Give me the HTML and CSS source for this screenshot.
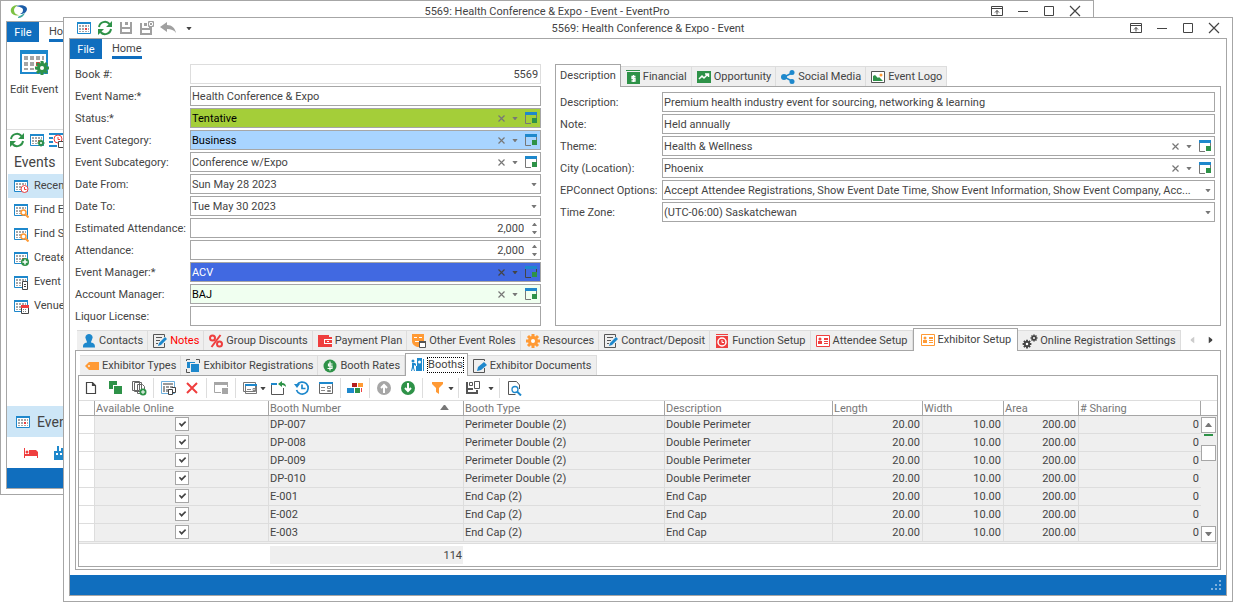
FILE: index.html
```html
<!DOCTYPE html>
<html lang="en">
<head>
  <meta charset="UTF-8">
  <meta name="viewport" content="width=device-width, initial-scale=1">
  <title>5569: Health Conference &amp; Expo - Event</title>
  <link rel="stylesheet" href="styles.css">
</head>
<body>
  <!-- icon sprite -->
  <svg class="sprite" aria-hidden="true">
    <symbol id="cal" viewBox="0 0 16 16">
      <path fill="#fff" stroke="#1e88cc" d="M1.5 2.5h13v11h-13z"/>
      <path fill="#1e88cc" d="M1 2h14v2H1z"/>
      <path fill="#a6a6a6" d="M3 5h2v2H3zM6 5h2v2H6zM9 5h2v2H9zM12 5h1v2h-1zM3 8h2v2H3zM6 8h2v2H6zM12 8h1v2h-1zM3 11h2v1H3zM6 11h2v1H6zM9 11h2v1H9zM12 11h1v1h-1z"/>
      <path fill="#ef3e3e" d="M9 8h2v2H9z"/>
    </symbol>
    <symbol id="refresh" viewBox="0 0 16 16">
      <path fill="none" stroke="#2e9248" stroke-width="2" d="M2 7a6 6 0 0 1 10.500-3M14 9a6 6 0 0 1-10.500 3"/>
      <path fill="#2e9248" d="M15 1v6H9zM1 15V9h6z"/>
    </symbol>
    <symbol id="save" viewBox="0 0 16 16">
      <path fill="#a0a0a0" d="M2 2h2v5h8V2h2v12H2zM4 9v3h8V9zM7 2h3v3H7z" fill-rule="evenodd"/>
    </symbol>
    <symbol id="savex" viewBox="0 0 16 16">
      <path fill="#a0a0a0" fill-rule="evenodd" d="M1 3h2v5h7V7h3v8H1zM3 10v3h8v-3zM5 3h3v3H5z"/>
      <path fill="#fff" stroke="#a0a0a0" d="M9.500 1.500h5v5h-5zM10.500 2.500l3 3M13.500 2.500l-3 3"/>
    </symbol>
    <symbol id="undo" viewBox="0 0 16 16">
      <path fill="#a0a0a0" d="M0 7l7-5v3c5 0 8 3 9 8-2-3-5-4-9-4v3z"/>
    </symbol>
    <symbol id="caret" viewBox="0 0 7 4"><path fill="currentColor" d="M0 0h7L4 4H3z"/></symbol>
    <symbol id="cross" viewBox="0 0 7 7"><path fill="none" stroke="currentColor" stroke-width="1.200" d="M.5.5l6 6M6.500.5l-6 6"/></symbol>
    <symbol id="lookup" viewBox="0 0 14 14">
      <path fill="none" stroke="currentColor" d="M1.500 3v9.500H7M12.500 3v4"/>
      <path fill="#1e88cc" d="M1 1h12v3H1z"/><path fill="#2e9248" d="M8 7h5v5H8z"/>
    </symbol>
    <symbol id="pin" viewBox="0 0 12 12"><path fill="none" stroke="#444" d="M.5 1.500h11v9H.5zM.5 3.500h11M6 9.500V5.500M4 7.500l2-2 2 2"/></symbol>
    <symbol id="min" viewBox="0 0 12 12"><path stroke="#444" d="M1 6.500h10"/></symbol>
    <symbol id="max" viewBox="0 0 12 12"><path fill="none" stroke="#444" d="M1.500 1.500h9v9h-9z"/></symbol>
    <symbol id="close" viewBox="0 0 12 12"><path stroke="#444" stroke-width="1.200" d="M1 1l10 10M11 1L1 11"/></symbol>
    <symbol id="gear" viewBox="0 0 16 16">
      <path fill="none" stroke="currentColor" stroke-width="3" d="M8 1v14M1 8h14M3 3l10 10M13 3L3 13"/>
      <circle cx="8" cy="8" r="5" fill="currentColor"/><circle cx="8" cy="8" r="2" fill="#fff"/>
    </symbol>
    <symbol id="cal-gear" viewBox="0 0 16 16"><use href="#cal"/><use href="#gear" x="8" y="7" width="8" height="8" color="#2e9248"/></symbol>
    <symbol id="cal-clock" viewBox="0 0 16 16"><use href="#cal"/><circle cx="11.500" cy="11" r="3.500" fill="#fff" stroke="#ef3e3e"/><path fill="none" stroke="#ef3e3e" d="M11.500 9v2.500h2"/></symbol>
    <symbol id="cal-search" viewBox="0 0 16 16"><use href="#cal"/><circle cx="10.500" cy="10.500" r="2.500" fill="#fff" stroke="#ff9a35" stroke-width="1.500"/><path stroke="#ff9a35" stroke-width="2" d="M12.500 12.500l3 3"/></symbol>
    <symbol id="cal-plus" viewBox="0 0 16 16"><use href="#cal"/><circle cx="12" cy="12" r="4" fill="#2e9248"/><path stroke="#fff" stroke-width="1.500" d="M9.500 12h5M12 9.500v5"/></symbol>
    <symbol id="cal-doc" viewBox="0 0 16 16"><use href="#cal"/><path fill="#fff" stroke="#444" d="M9.500 7.500h5v8h-5z"/><path stroke="#444" d="M11 10.500h2M11 12.500h2"/></symbol>
    <symbol id="cal-cal" viewBox="0 0 16 16"><use href="#cal"/><path fill="#fff" stroke="#444" d="M8.500 8.500h7v7h-7z"/><path fill="#ef3e3e" d="M8 7h8v3H8z"/><path fill="#888" d="M10 11h1v1h-1zM12 11h1v1h-1zM10 13h1v1h-1zM12 13h1v1h-1z"/></symbol>
    <symbol id="list-clock" viewBox="0 0 16 16"><path fill="#1e88cc" d="M0 1h16v2H0zM0 5h4v2H0zM0 9h4v2H0zM0 13h8v2H0z"/><circle cx="9" cy="7" r="4" fill="#fff" stroke="#ef3e3e"/><path fill="none" stroke="#ef3e3e" d="M9 5v2.500h2"/><path fill="#fff" stroke="#444" d="M9.500 9.500h6v6h-6z"/></symbol>
    <symbol id="bed" viewBox="0 0 16 16"><path fill="#ef3e3e" d="M1 3h1v6h4V5h7l2 2v6h-1v-2H2v2H1z"/><circle cx="4" cy="7" r="1.500" fill="#ef3e3e"/></symbol>
    <symbol id="building" viewBox="0 0 16 16"><path fill="#1e88cc" fill-rule="evenodd" d="M1 6h3V1h2v5h2V3h2v3h5v9H1zM3 8v2h2V8zM7 8v2h2V8zM11 8v2h2V8z"/></symbol>
    <symbol id="logo" viewBox="0 0 18 16"><path fill="#7cc142" d="M8 2C3 2 0 5 1 9c1 3 5 4 9 3-4 0-6-2-6-5 0-2 2-4 4-5z"/><path fill="#1c5da8" d="M6 3c6-2 11 0 11 3s-3 5-7 5c2-1 3-2 3-4S11 4 6 3z"/><path fill="#3fa9a0" d="M8 14c1-1 4-2 7-4-1 3-4 5-7 5z"/></symbol>
    <symbol id="money" viewBox="0 0 16 16"><path fill="#2e9248" d="M1 1h14v1H1zM2 3h13v12H2z"/><path fill="none" stroke="#fff" stroke-width="1.300" d="M10.500 7.500H7v2h3v2.500H6.500M8.500 6v7"/></symbol>
    <symbol id="trend" viewBox="0 0 16 16"><path fill="#2e9248" d="M1 2h14v12H1z"/><path fill="none" stroke="#fff" stroke-width="1.500" d="M3 10l3-3 2 2 4-4M9 5h3.500v3"/></symbol>
    <symbol id="share" viewBox="0 0 16 16"><path fill="none" stroke="#1e88cc" stroke-width="1.500" d="M12 4L4 8l8 4"/><g fill="#1e88cc"><circle cx="4" cy="8" r="3"/><circle cx="12" cy="3.500" r="2.500"/><circle cx="12" cy="12.500" r="2.500"/></g></symbol>
    <symbol id="photo" viewBox="0 0 16 16"><path fill="#fff" stroke="#555" d="M1.500 2.500h13v11h-13z"/><path fill="#2e9248" d="M3 12V7l2-1 3 3 1-1 4 4z"/><circle cx="11" cy="6" r="1.500" fill="#ff9a35"/></symbol>
    <symbol id="person" viewBox="0 0 16 16"><path fill="#1e88cc" d="M8 1a3.500 3.500 0 0 1 3 5.500C10.500 8 10 8.500 10 9.500c3 .5 4 1.500 4 5H2c0-3.500 1-4.500 4-5 0-1-.5-1.500-1-3A3.500 3.500 0 0 1 8 1z"/></symbol>
    <symbol id="note" viewBox="0 0 16 16"><path fill="none" stroke="#555" d="M12.500 10v4.500h-11v-13h11V4M4 4.500h6M4 7.500h4M4 10.500h2"/><path fill="#1e88cc" d="M6 13l1-3 6-6 2 2-6 6z"/></symbol>
    <symbol id="pen" viewBox="0 0 16 16"><path fill="none" stroke="#555" d="M12.500 10v4.500h-11v-13h11V3"/><path fill="#1e88cc" d="M5 13l1-4 6-5 3 3-6 5z"/></symbol>
    <symbol id="percent" viewBox="0 0 16 16"><g fill="none" stroke="#ef3e3e" stroke-width="2"><circle cx="4.500" cy="5" r="2.500"/><circle cx="11.500" cy="11" r="2.500"/><path d="M12.500 2L3.500 14"/></g></symbol>
    <symbol id="wallet" viewBox="0 0 16 16"><path fill="#ef3e3e" d="M1 2h11v2h3v10H1z"/><path fill="#fff" d="M7 6h8v5H7z"/><path fill="#ef3e3e" d="M8 7h7v3H8z"/><path fill="#fff" d="M10 8h2v1h-2z"/></symbol>
    <symbol id="mask" viewBox="0 0 16 16"><path fill="#ff9a35" d="M1 1h12v7c0 4-2 6-5 6S1 12 1 8z"/><path fill="#fff" d="M3 4h3v1H3zM8 4h3v1H8zM4 8h5v1H4z"/><path fill="#fff" stroke="#555" d="M8.500 8.500h6v6h-6z"/><path fill="#555" d="M8 8h7v2H8z"/></symbol>
    <symbol id="clock" viewBox="0 0 16 16"><path fill="#ef3e3e" d="M2 1h12v1H2zM2 3h12v12H2z"/><circle cx="8" cy="9" r="4" fill="#ef3e3e" stroke="#fff" stroke-width="1.500"/><path fill="none" stroke="#fff" d="M8 7v2.500h2"/></symbol>
    <symbol id="card" viewBox="0 0 16 16"><path fill="#fff" stroke="currentColor" d="M1.500 2.500h13v11h-13z"/><circle cx="5" cy="6" r="1.500" fill="currentColor"/><path fill="currentColor" d="M3 8h4v3H3zM9 5h4v2H9zM9 8h4v1H9zM9 10h4v1H9z"/></symbol>
    <symbol id="gears" viewBox="0 0 16 16"><use href="#gear" x="0" y="6" width="10" height="10"/><use href="#gear" x="8" y="1" width="8" height="8"/></symbol>
    <symbol id="tag" viewBox="0 0 16 16"><path fill="#ff9a35" fill-rule="evenodd" d="M1 8l4-4h10v8H5zM4 8a1 1 0 1 0 2 0 1 1 0 0 0-2 0z"/></symbol>
    <symbol id="regs" viewBox="0 0 16 16"><path fill="#1e88cc" d="M2 4h8v1H5v5H2zM6 6h8v8H6z"/><path fill="none" stroke="#555" d="M1.500 3V1.500H5M11 1.500h3.500V5M1.500 11v3.500H5"/></symbol>
    <symbol id="coin" viewBox="0 0 16 16"><circle cx="8" cy="8" r="6.500" fill="#2e9248"/><path fill="none" stroke="#fff" stroke-width="1.200" d="M10.500 6H6.500v2h3.500v2.500H5.500M8 3.500v9"/></symbol>
    <symbol id="booth" viewBox="0 0 16 16"><path fill="#1e88cc" d="M7 1h5v13H6V9h1zM13 2h1v12h-1zM2 6h3l1 1v2L4 8v3l1 3H4l-1-3-1 3H1l1-4z"/><circle cx="3" cy="4" r="1.500" fill="#1e88cc"/><circle cx="9.500" cy="5" r="1.500" fill="#fff"/></symbol>
    <symbol id="new" viewBox="0 0 16 16"><path fill="#fff" stroke="#444" stroke-width="1.200" d="M3.500 2.500h6l3 3v8h-9zM9.500 2.500v3h3"/></symbol>
    <symbol id="copy" viewBox="0 0 16 16"><path fill="#2e9248" d="M2 1h8v4H6v4H2zM7 6h8v8H7z"/></symbol>
    <symbol id="copies" viewBox="0 0 16 16"><path fill="#fff" stroke="#666" d="M1.500 1.500h7v9h-7zM3.500 2.500h7v9h-7zM6.500 4.500h5l2 2v7h-7z"/><circle cx="12" cy="12" r="3.500" fill="#2e9248"/><path stroke="#fff" d="M10 12h4M12 10v4"/></symbol>
    <symbol id="layout" viewBox="0 0 16 16"><path fill="#fff" stroke="#6fb1de" d="M1.500 1.500h13v12h-13z"/><path fill="#999" d="M3 3h10v2H3zM3 6h2v6H3zM6 6h3v2H6zM6 9h3v3H6zM10 6h3v2h-3z"/><path fill="#fff" stroke="#444" d="M8.500 9.500h4v5h-4zM11.500 7.500h4v5h-3"/></symbol>
    <symbol id="delete" viewBox="0 0 16 16"><path stroke="#ef3e3e" stroke-width="2" d="M3 3l10 10M13 3L3 13"/></symbol>
    <symbol id="winoff" viewBox="0 0 16 16"><path fill="none" stroke="#a6a6a6" d="M1.500 3v9.500H8M14.500 3v4"/><path fill="#a6a6a6" d="M1 2h14v3H1zM9 8h6v6H9z"/></symbol>
    <symbol id="form" viewBox="0 0 16 16"><path fill="#fff" stroke="#777" d="M1.500 2.500h12v9h-12zM3.500 4.500h11v9h-11z"/><path fill="#1e88cc" d="M3 4h12v2H3z"/><path stroke="#888" d="M5 9.500h4M11 8.500h2v2h-2z" fill="none"/></symbol>
    <symbol id="open" viewBox="0 0 16 16"><path fill="none" stroke="#555" d="M1.500 3v11.500h12V8"/><path fill="#1e88cc" d="M1 3h6v2H1z"/><path fill="#2e9248" d="M8 4l4-3v2c3 0 4 2 4 4-1-1-2-2-4-2v2z"/></symbol>
    <symbol id="history" viewBox="0 0 16 16"><path fill="none" stroke="#1e88cc" stroke-width="1.700" d="M2.500 10A6 6 0 1 0 3 5M8 4.500v4h3.500"/><path fill="#1e88cc" d="M0 4h6L3 8z"/></symbol>
    <symbol id="fields" viewBox="0 0 16 16"><path fill="#fff" stroke="#666" d="M1.500 2.500h13v11h-13z"/><path fill="#1e88cc" d="M1 2h14v2H1z"/><path fill="none" stroke="#888" d="M3 7.500h4M3 10.500h4M9.500 6.500h3v2h-3zM9.500 10.500h3v1h-3z"/></symbol>
    <symbol id="boxes" viewBox="0 0 16 16"><path fill="#b51e1e" d="M5 3h5v4H5z"/><path fill="#ff9a35" d="M11 3h5v4h-5z"/><path fill="#1e88cc" d="M0 8h7v5H0z"/><path fill="#2e9248" d="M8 8h5v5H8z"/><path fill="#ef3e3e" d="M14 8h1v4h-1z"/></symbol>
    <symbol id="up" viewBox="0 0 16 16"><circle cx="8" cy="8" r="7" fill="#a6a6a6"/><path fill="none" stroke="#fff" stroke-width="2" d="M8 13V5M5 8l3-3 3 3"/></symbol>
    <symbol id="down" viewBox="0 0 16 16"><circle cx="8" cy="8" r="7" fill="#2e9248"/><path fill="none" stroke="#fff" stroke-width="2" d="M8 3v8M5 8l3 3 3-3"/></symbol>
    <symbol id="filter" viewBox="0 0 16 16"><path fill="#ff9a35" d="M3 2h11v2l-4 4v6l-3-2V8L3 4z"/></symbol>
    <symbol id="savelay" viewBox="0 0 16 16"><path fill="none" stroke="#555" stroke-width="2" d="M2 2v11h10v-3M2 9h6"/><path fill="none" stroke="#555" d="M4.500 2.500h3v3h-3zM9.500 1.500h5v7h-5z"/></symbol>
    <symbol id="preview" viewBox="0 0 16 16"><path fill="none" stroke="#555" d="M13.500 9V5l-3-3.500h-8v13h7"/><circle cx="9" cy="9.500" r="3" fill="#fff" stroke="#1e88cc" stroke-width="1.300"/><path stroke="#1e88cc" stroke-width="2" d="M11 11.500l4 4"/></symbol>
  </svg>

  <div class="desktop">
    <!-- main application window -->
    <section class="window window-back">
      <header class="titlebar">
        <div class="quick"><svg class="logo"><use href="#logo"/></svg></div>
        <div class="title">5569: Health Conference &amp; Expo - Event - EventPro</div>
        <div class="sys">
          <button aria-label="Pin"><svg><use href="#pin"/></svg></button>
          <button aria-label="Minimize"><svg><use href="#min"/></svg></button>
          <button aria-label="Maximize"><svg><use href="#max"/></svg></button>
          <button aria-label="Close"><svg><use href="#close"/></svg></button>
        </div>
      </header>
      <div class="frame">
        <nav class="ribbon-tabs">
          <button class="file">File</button>
          <button class="home">Home</button>
        </nav>
        <div class="ribbon">
          <button class="big-button">
            <svg><use href="#cal-gear"/></svg>
            <span>Edit Event</span>
          </button>
        </div>
        <div class="side">
          <div class="side-tools">
            <button aria-label="Refresh"><svg class="icon"><use href="#refresh"/></svg></button>
            <button aria-label="Edit event"><svg class="icon"><use href="#cal-gear"/></svg></button>
            <button aria-label="Schedule"><svg class="icon"><use href="#list-clock"/></svg></button>
          </div>
          <h2>Events</h2>
          <a class="side-item active" href="#"><svg class="icon"><use href="#cal-clock"/></svg>Recent</a>
          <a class="side-item" href="#"><svg class="icon"><use href="#cal-search"/></svg>Find E</a>
          <a class="side-item" href="#"><svg class="icon"><use href="#cal-search"/></svg>Find S</a>
          <a class="side-item" href="#"><svg class="icon"><use href="#cal-plus"/></svg>Create</a>
          <a class="side-item" href="#"><svg class="icon"><use href="#cal-doc"/></svg>Event</a>
          <a class="side-item" href="#"><svg class="icon"><use href="#cal-cal"/></svg>Venue</a>
          <a class="side-group" href="#"><svg class="icon"><use href="#cal"/></svg>Events</a>
          <div class="side-icons">
            <button aria-label="Hotels"><svg class="icon"><use href="#bed"/></svg></button>
            <button aria-label="Venues"><svg class="icon"><use href="#building"/></svg></button>
          </div>
        </div>
        <footer class="status"></footer>
      </div>
    </section>

    <!-- event window -->
    <section class="window window-front">
      <header class="titlebar">
        <div class="quick">
          <button aria-label="Event"><svg class="icon"><use href="#cal"/></svg></button>
          <button aria-label="Refresh"><svg class="icon"><use href="#refresh"/></svg></button>
          <button aria-label="Save"><svg class="icon"><use href="#save"/></svg></button>
          <button aria-label="Save and close"><svg class="icon"><use href="#savex"/></svg></button>
          <button aria-label="Undo"><svg class="icon"><use href="#undo"/></svg></button>
          <button aria-label="Customize"><svg class="caret"><use href="#caret"/></svg></button>
        </div>
        <div class="title">5569: Health Conference &amp; Expo - Event</div>
        <div class="sys">
          <button aria-label="Pin"><svg><use href="#pin"/></svg></button>
          <button aria-label="Minimize"><svg><use href="#min"/></svg></button>
          <button aria-label="Maximize"><svg><use href="#max"/></svg></button>
          <button aria-label="Close"><svg><use href="#close"/></svg></button>
        </div>
      </header>
      <div class="frame">
        <nav class="ribbon-tabs">
          <button class="file">File</button>
          <button class="home">Home</button>
        </nav>
        <main class="content">
          <div class="form">
            <div class="fields">
              <div class="row"><label for="book">Book #:</label>
                <div class="field readonly"><input class="num" id="book" value="5569" readonly></div></div>
              <div class="row"><label for="name">Event Name:*</label>
                <div class="field"><input id="name" value="Health Conference &amp; Expo"></div></div>
              <div class="row"><label for="status">Status:*</label>
                <div class="field green"><select id="status"><option>Tentative</option></select>
                  <button class="clear" aria-label="Clear"><svg><use href="#cross"/></svg></button><svg class="arrow"><use href="#caret"/></svg><button class="look" aria-label="Look up"><svg><use href="#lookup"/></svg></button></div></div>
              <div class="row"><label for="category">Event Category:</label>
                <div class="field sky"><select id="category"><option>Business</option></select>
                  <button class="clear" aria-label="Clear"><svg><use href="#cross"/></svg></button><svg class="arrow"><use href="#caret"/></svg><button class="look" aria-label="Look up"><svg><use href="#lookup"/></svg></button></div></div>
              <div class="row"><label for="subcategory">Event Subcategory:</label>
                <div class="field"><select id="subcategory"><option>Conference w/Expo</option></select>
                  <button class="clear" aria-label="Clear"><svg><use href="#cross"/></svg></button><svg class="arrow"><use href="#caret"/></svg><button class="look" aria-label="Look up"><svg><use href="#lookup"/></svg></button></div></div>
              <div class="row"><label for="from">Date From:</label>
                <div class="field"><select id="from"><option>Sun May 28 2023</option></select><svg class="arrow last"><use href="#caret"/></svg></div></div>
              <div class="row"><label for="to">Date To:</label>
                <div class="field"><select id="to"><option>Tue May 30 2023</option></select><svg class="arrow last"><use href="#caret"/></svg></div></div>
              <div class="row"><label for="estimated">Estimated Attendance:</label>
                <div class="field"><input class="num" id="estimated" value="2,000">
                  <div class="spin"><button class="spin-up" aria-label="Increase"><svg><use href="#caret"/></svg></button><button aria-label="Decrease"><svg><use href="#caret"/></svg></button></div></div></div>
              <div class="row"><label for="attendance">Attendance:</label>
                <div class="field"><input class="num" id="attendance" value="2,000">
                  <div class="spin"><button class="spin-up" aria-label="Increase"><svg><use href="#caret"/></svg></button><button aria-label="Decrease"><svg><use href="#caret"/></svg></button></div></div></div>
              <div class="row"><label for="manager">Event Manager:*</label>
                <div class="field royal"><select id="manager"><option>ACV</option></select>
                  <button class="clear" aria-label="Clear"><svg><use href="#cross"/></svg></button><svg class="arrow"><use href="#caret"/></svg><button class="look" aria-label="Look up"><svg><use href="#lookup"/></svg></button></div></div>
              <div class="row"><label for="account">Account Manager:</label>
                <div class="field honeydew"><select id="account"><option>BAJ</option></select>
                  <button class="clear" aria-label="Clear"><svg><use href="#cross"/></svg></button><svg class="arrow"><use href="#caret"/></svg><button class="look" aria-label="Look up"><svg><use href="#lookup"/></svg></button></div></div>
              <div class="row"><label for="liquor">Liquor License:</label>
                <div class="field"><input id="liquor"></div></div>
            </div>

            <div class="details">
              <div class="tabs" role="tablist">
                <button class="tab active" role="tab">Description</button>
                <button class="tab" role="tab"><svg class="icon"><use href="#money"/></svg>Financial</button>
                <button class="tab" role="tab"><svg class="icon"><use href="#trend"/></svg>Opportunity</button>
                <button class="tab" role="tab"><svg class="icon"><use href="#share"/></svg>Social Media</button>
                <button class="tab" role="tab"><svg class="icon"><use href="#photo"/></svg>Event Logo</button>
              </div>
              <div class="panel fields">
                <div class="row"><label for="description">Description:</label>
                  <div class="field"><input id="description" value="Premium health industry event for sourcing, networking &amp; learning"></div></div>
                <div class="row"><label for="note-text">Note:</label>
                  <div class="field"><input id="note-text" value="Held annually"></div></div>
                <div class="row"><label for="theme">Theme:</label>
                  <div class="field"><select id="theme"><option>Health &amp; Wellness</option></select>
                    <button class="clear" aria-label="Clear"><svg><use href="#cross"/></svg></button><svg class="arrow"><use href="#caret"/></svg><button class="look" aria-label="Look up"><svg><use href="#lookup"/></svg></button></div></div>
                <div class="row"><label for="city">City (Location):</label>
                  <div class="field"><select id="city"><option>Phoenix</option></select>
                    <button class="clear" aria-label="Clear"><svg><use href="#cross"/></svg></button><svg class="arrow"><use href="#caret"/></svg><button class="look" aria-label="Look up"><svg><use href="#lookup"/></svg></button></div></div>
                <div class="row"><label for="epconnect">EPConnect Options:</label>
                  <div class="field"><select id="epconnect"><option>Accept Attendee Registrations, Show Event Date Time, Show Event Information, Show Event Company, Acc...</option></select><svg class="arrow last"><use href="#caret"/></svg></div></div>
                <div class="row"><label for="zone">Time Zone:</label>
                  <div class="field"><select id="zone"><option>(UTC-06:00) Saskatchewan</option></select><svg class="arrow last"><use href="#caret"/></svg></div></div>
              </div>
            </div>
          </div>

          <div class="section">
            <div class="tabs indent" role="tablist">
              <button class="tab" role="tab"><svg class="icon"><use href="#person"/></svg>Contacts</button>
              <button class="tab alert" role="tab"><svg class="icon"><use href="#note"/></svg>Notes</button>
              <button class="tab" role="tab"><svg class="icon"><use href="#percent"/></svg>Group Discounts</button>
              <button class="tab" role="tab"><svg class="icon"><use href="#wallet"/></svg>Payment Plan</button>
              <button class="tab" role="tab"><svg class="icon"><use href="#mask"/></svg>Other Event Roles</button>
              <button class="tab" role="tab"><svg class="icon orange"><use href="#gear"/></svg>Resources</button>
              <button class="tab" role="tab"><svg class="icon"><use href="#note"/></svg>Contract/Deposit</button>
              <button class="tab" role="tab"><svg class="icon"><use href="#clock"/></svg>Function Setup</button>
              <button class="tab" role="tab"><svg class="icon red"><use href="#card"/></svg>Attendee Setup</button>
              <button class="tab active" role="tab"><svg class="icon orange"><use href="#card"/></svg>Exhibitor Setup</button>
              <button class="tab" role="tab"><svg class="icon"><use href="#gears"/></svg>Online Registration Settings</button>
              <button class="tab-scroll prev" aria-label="Previous tabs"><svg><use href="#caret"/></svg></button>
              <button class="tab-scroll next" aria-label="Next tabs"><svg><use href="#caret"/></svg></button>
            </div>
            <div class="panel outer">
              <div class="tabs indent" role="tablist">
                <button class="tab" role="tab"><svg class="icon"><use href="#tag"/></svg>Exhibitor Types</button>
                <button class="tab" role="tab"><svg class="icon"><use href="#regs"/></svg>Exhibitor Registrations</button>
                <button class="tab" role="tab"><svg class="icon"><use href="#coin"/></svg>Booth Rates</button>
                <button class="tab active focused" role="tab"><svg class="icon"><use href="#booth"/></svg><span>Booths</span></button>
                <button class="tab" role="tab"><svg class="icon"><use href="#pen"/></svg>Exhibitor Documents</button>
              </div>
              <div class="panel inner">
                <div class="toolbar">
                  <button aria-label="New"><svg class="icon"><use href="#new"/></svg></button>
                  <button aria-label="Copy"><svg class="icon"><use href="#copy"/></svg></button>
                  <button aria-label="Add multiple"><svg class="icon"><use href="#copies"/></svg></button>
                  <i class="sep"></i>
                  <button aria-label="Edit"><svg class="icon"><use href="#layout"/></svg></button>
                  <button aria-label="Delete"><svg class="icon"><use href="#delete"/></svg></button>
                  <i class="sep"></i>
                  <button aria-label="Lookup"><svg class="icon"><use href="#winoff"/></svg></button>
                  <i class="sep"></i>
                  <button class="drop" aria-label="Views"><svg class="icon"><use href="#form"/></svg><svg class="caret"><use href="#caret"/></svg></button>
                  <button aria-label="Open"><svg class="icon"><use href="#open"/></svg></button>
                  <button aria-label="History"><svg class="icon"><use href="#history"/></svg></button>
                  <button aria-label="Form"><svg class="icon"><use href="#fields"/></svg></button>
                  <i class="sep"></i>
                  <button aria-label="Booths"><svg class="icon"><use href="#boxes"/></svg></button>
                  <i class="sep"></i>
                  <button aria-label="Move up"><svg class="icon"><use href="#up"/></svg></button>
                  <button aria-label="Move down"><svg class="icon"><use href="#down"/></svg></button>
                  <i class="sep"></i>
                  <button class="drop filter" aria-label="Filter"><svg class="icon"><use href="#filter"/></svg><svg class="caret"><use href="#caret"/></svg></button>
                  <i class="sep"></i>
                  <button class="drop wide" aria-label="Save layout"><svg class="icon"><use href="#savelay"/></svg><svg class="caret"><use href="#caret"/></svg></button>
                  <i class="sep"></i>
                  <button aria-label="Preview"><svg class="icon"><use href="#preview"/></svg></button>
                </div>
                <div class="grid">
                  <table>
                    <colgroup>
                      <col class="c-mark"><col class="c-online"><col class="c-number"><col class="c-type"><col class="c-desc"><col class="c-length"><col class="c-width"><col class="c-area"><col>
                    </colgroup>
                    <thead>
                      <tr><th></th><th>Available Online</th><th class="sorted">Booth Number<svg><use href="#caret"/></svg></th><th>Booth Type</th><th>Description</th><th>Length</th><th>Width</th><th>Area</th><th># Sharing</th></tr>
                    </thead>
                    <tbody>
                      <tr><td></td><td><input type="checkbox" aria-label="Available online DP-007" checked></td><td>DP-007</td><td>Perimeter Double (2)</td><td>Double Perimeter</td><td>20.00</td><td>10.00</td><td>200.00</td><td>0</td></tr>
                      <tr><td></td><td><input type="checkbox" aria-label="Available online DP-008" checked></td><td>DP-008</td><td>Perimeter Double (2)</td><td>Double Perimeter</td><td>20.00</td><td>10.00</td><td>200.00</td><td>0</td></tr>
                      <tr><td></td><td><input type="checkbox" aria-label="Available online DP-009" checked></td><td>DP-009</td><td>Perimeter Double (2)</td><td>Double Perimeter</td><td>20.00</td><td>10.00</td><td>200.00</td><td>0</td></tr>
                      <tr><td></td><td><input type="checkbox" aria-label="Available online DP-010" checked></td><td>DP-010</td><td>Perimeter Double (2)</td><td>Double Perimeter</td><td>20.00</td><td>10.00</td><td>200.00</td><td>0</td></tr>
                      <tr><td></td><td><input type="checkbox" aria-label="Available online E-001" checked></td><td>E-001</td><td>End Cap (2)</td><td>End Cap</td><td>20.00</td><td>10.00</td><td>200.00</td><td>0</td></tr>
                      <tr><td></td><td><input type="checkbox" aria-label="Available online E-002" checked></td><td>E-002</td><td>End Cap (2)</td><td>End Cap</td><td>20.00</td><td>10.00</td><td>200.00</td><td>0</td></tr>
                      <tr><td></td><td><input type="checkbox" aria-label="Available online E-003" checked></td><td>E-003</td><td>End Cap (2)</td><td>End Cap</td><td>20.00</td><td>10.00</td><td>200.00</td><td>0</td></tr>
                    </tbody>
                  </table>
                  <div class="scroll">
                    <div class="scroll-head"></div>
                    <div class="scroll-track">
                      <button aria-label="Scroll up" class="flip"><svg><use href="#caret"/></svg></button>
                      <i class="marker"></i>
                      <i class="thumb"></i>
                      <button aria-label="Scroll down"><svg><use href="#caret"/></svg></button>
                    </div>
                  </div>
                </div>
                <div class="summary"><span>114</span></div>
              </div>
            </div>
          </div>
        </main>
        <footer class="status">
          <svg class="grip" viewBox="0 0 10 10"><path fill="#7fb0dc" d="M8 0h2v2H8zM4 4h2v2H4zM8 4h2v2H8zM0 8h2v2H0zM4 8h2v2H4zM8 8h2v2H8z"/></svg>
        </footer>
      </div>
    </section>
  </div>
</body>
</html>
```
FILE: styles.css
```css
* {
  box-sizing: border-box;
}
body {
  margin: 0;
  background: #fff;
  color: #444;
  font: 11px/14px Roboto, "DejaVu Sans Condensed", sans-serif;
}
button, input, select {
  margin: 0;
  padding: 0;
  border: 0;
  background: none;
  color: inherit;
  font: inherit;
}
button {
  display: flex;
  align-items: center;
  justify-content: center;
}
svg {
  display: block;
  flex: none;
}
.sprite {
  position: absolute;
  width: 0;
  height: 0;
}
.icon {
  width: 16px;
  height: 16px;
}
.caret {
  width: 6px;
  height: 3px;
}
.orange {
  color: #ff9a35;
}
.red {
  color: #ef3e3e;
}

/* windows */
.desktop {
  position: relative;
  min-height: 100vh;
  overflow: hidden;
}
.window {
  position: absolute;
  display: flex;
  flex-direction: column;
  background: #fff;
  border: 1px solid #a6a6a6;
}
.window-back {
  inset: 0 139px 107px 0;
}
.window-front {
  inset: 17px 0 0 63px;
}
.titlebar {
  display: grid;
  grid-template-columns: 1fr auto 1fr;
  align-items: center;
  height: 20px;
}
.title {
  padding-top: 1px;
}
.quick {
  display: flex;
  padding-left: 9px;
}
.quick button {
  width: 21px;
}
.logo {
  width: 18px;
  height: 16px;
}
.sys {
  display: flex;
  justify-content: flex-end;
  padding-right: 5px;
}
.sys button {
  width: 26px;
  height: 20px;
}
.sys svg {
  width: 12px;
  height: 12px;
}
.frame {
  flex: 1;
  display: flex;
  flex-direction: column;
  margin: 0 5px 5px;
  border: 1px solid #a6a6a6;
}
.ribbon-tabs {
  display: flex;
  height: 20px;
}
.file {
  width: 32px;
  padding-top: 2px;
  background: #106ebe;
  color: #fff;
}
.home {
  margin-left: 10px;
  padding-top: 3px;
  border-bottom: 3px solid #106ebe;
}
.status {
  display: flex;
  align-items: center;
  justify-content: flex-end;
  height: 20px;
  padding-right: 5px;
  background: #106ebe;
}
.grip {
  width: 10px;
  height: 10px;
}

/* navigation of the main window */
.ribbon {
  height: 88px;
  padding-top: 4px;
  border-bottom: 1px solid #ddd;
}
.big-button {
  flex-direction: column;
  padding: 0 3px;
}
.big-button svg {
  width: 32px;
  height: 32px;
}
.big-button span {
  margin-top: 5px;
}
.side {
  flex: 1;
  display: flex;
  flex-direction: column;
}
.side-tools {
  display: flex;
  gap: 4px;
  padding: 2px;
}
.side h2 {
  margin: 0;
  padding: 4px 7px;
  font-size: 14px;
  font-weight: normal;
  line-height: 16px;
}
.side a {
  display: flex;
  align-items: center;
  color: inherit;
  text-decoration: none;
  white-space: nowrap;
}
.side-item {
  height: 24px;
  margin-left: 1px;
  padding-left: 5px;
  gap: 5px;
}
.side a.active, .side a.side-group {
  background: #cde6f7;
}
.side a.side-group {
  height: 31px;
  margin-top: auto;
  padding-left: 8px;
  gap: 6px;
  font-size: 14px;
}
.side-icons {
  display: flex;
  gap: 14px;
  height: 31px;
  padding-left: 16px;
}

/* event form */
.content {
  flex: 1;
  display: flex;
  flex-direction: column;
  padding: 5px;
}
.form {
  display: grid;
  grid-template-columns: 7fr 10fr;
  gap: 14px;
}
.row {
  display: grid;
  grid-template-columns: 115px 1fr;
  align-items: center;
  white-space: nowrap;
}
.row label {
  padding-top: 2px;
}
.fields {
  display: grid;
  align-content: start;
  gap: 2px;
}
.field {
  display: flex;
  align-items: center;
  min-width: 0;
  height: 20px;
  border: 1px solid #a6a6a6;
  color: #444;
}
.field input, .field select {
  flex: 1;
  min-width: 0;
  height: 18px;
  padding: 0 1px;
  outline: 0;
  appearance: none;
}
.field select {
  padding-top: 1px;
}
.field .num {
  padding-right: 2px;
  text-align: right;
}
.field button, .arrow {
  color: #777;
}
.readonly {
  border-color: #ddd;
}
.green {
  background: #a4ce39;
}
.sky {
  background: #a8d4ff;
}
.royal {
  background: #4169e1;
}
.honeydew {
  background: #f0fff0;
}
.green select, .sky select, .honeydew select {
  color: #000;
}
.royal select {
  color: #fff;
}
.royal button, .royal .arrow {
  color: #444;
}
.clear svg {
  width: 7px;
  height: 7px;
}
.arrow {
  width: 6px;
  height: 3px;
  margin: 0 5px 0 7px;
}
.arrow.last {
  margin: 0 3px;
}
.look {
  padding: 0 2px 0 1px;
}
.look svg {
  width: 14px;
  height: 14px;
}
.spin {
  display: grid;
  gap: 5px;
  padding: 0 3px 0 6px;
}
.spin svg {
  width: 5px;
  height: 3px;
}
.spin-up svg, .flip svg {
  transform: rotate(180deg);
}
.details {
  display: flex;
  flex-direction: column;
}
.details .panel {
  flex: 1;
  padding: 5px 5px 0 4px;
}
.details .row {
  grid-template-columns: 102px 1fr;
}

/* tabs */
.tabs {
  display: flex;
  align-items: flex-end;
  height: 22px;
}
.indent {
  padding-left: 2px;
}
.tab {
  height: 20px;
  padding: 0 4px;
  gap: 2px;
  background: #efefef;
  border: solid #ddd;
  border-width: 1px 1px 0 0;
  white-space: nowrap;
}
.tab.active {
  z-index: 1;
  height: 23px;
  margin-bottom: -1px;
  padding: 0 4px 1px;
  background: #fff;
  border: 1px solid #a6a6a6;
  border-bottom: 0;
}
.section > .tabs .tab.active {
  padding: 0 6px 1px;
}
.tab.alert {
  color: #f00;
}
.focused span {
  outline: 1px dotted #000;
}
.tab-scroll {
  width: 18px;
  height: 20px;
}
.tab-scroll svg {
  width: 7px;
  height: 4px;
}
.prev {
  margin-left: auto;
  color: #ccc;
}
.next {
  margin-right: 2px;
}
.prev svg {
  transform: rotate(90deg);
}
.next svg {
  transform: rotate(-90deg);
}
.panel {
  border: 1px solid #a6a6a6;
}
.section {
  flex: 1;
  display: flex;
  flex-direction: column;
  padding-top: 2px;
}
.outer {
  flex: 1;
  display: flex;
  flex-direction: column;
  padding: 2px;
}
.inner {
  flex: 1;
  display: flex;
  flex-direction: column;
}

/* booth grid */
.toolbar {
  display: flex;
  align-items: center;
  height: 25px;
  border-bottom: 1px solid #ddd;
}
.toolbar button {
  height: 24px;
  padding: 0 4px;
}
.toolbar .drop {
  padding-right: 0;
  gap: 2px;
}
.toolbar .filter {
  padding-right: 2px;
  gap: 3px;
}
.toolbar .wide {
  padding-right: 3px;
  gap: 7px;
}
.sep {
  width: 1px;
  height: 20px;
  margin: 0 2px;
  background: #ddd;
}
.grid {
  display: flex;
  padding-bottom: 1px;
  background: #efefef;
  border-bottom: 1px solid #ddd;
}
table {
  flex: 1;
  border-collapse: separate;
  border-spacing: 0;
  table-layout: fixed;
  width: 100%;
}
.c-mark {
  width: 16px;
}
.c-online {
  width: 174px;
}
.c-number {
  width: 195px;
}
.c-type {
  width: 201px;
}
.c-desc {
  width: 168px;
}
.c-length {
  width: 90px;
}
.c-width {
  width: 81px;
}
.c-area {
  width: 75px;
}
th {
  height: 15px;
  padding: 1px 1px 0;
  background: #fff;
  border: solid #a6a6a6;
  border-width: 0 1px 1px 0;
  color: #777;
  font-weight: normal;
  line-height: 13px;
  text-align: left;
}
.sorted svg {
  float: right;
  width: 9px;
  height: 5px;
  margin: 3px 13px 0 0;
  transform: rotate(180deg);
}
td {
  height: 18px;
  padding: 0 1px;
  border: solid #ddd;
  border-width: 0 1px 1px 0;
  line-height: 14px;
}
td:first-child {
  background: #fff;
}
td:last-child {
  border-right: 0;
}
td:nth-child(2) {
  text-align: center;
}
td:nth-child(n+6) {
  padding-right: 2px;
  text-align: right;
}
td input {
  display: block;
  width: 14px;
  height: 14px;
  margin: 0 auto 1px;
  appearance: none;
  background: #fff;
  border: 1px solid #a6a6a6;
}
td input:checked::after {
  content: "";
  display: block;
  width: 3px;
  height: 6px;
  margin: 1px 4px;
  box-sizing: content-box;
  border: solid #444;
  border-width: 0 2px 2px 0;
  transform: rotate(45deg) scale(.8);
}
.scroll {
  display: flex;
  flex-direction: column;
  width: 16px;
}
.scroll-head {
  height: 15px;
  background: #fff;
  border-bottom: 1px solid #a6a6a6;
}
.scroll-track {
  flex: 1;
  display: flex;
  flex-direction: column;
  align-items: flex-start;
  padding-top: 1px;
}
.scroll-track button, .thumb {
  width: 15px;
  height: 16px;
  background: #fff;
  border: 1px solid #a6a6a6;
  color: #777;
}
.scroll-track svg {
  width: 7px;
  height: 4px;
}
.scroll-track button:last-child {
  margin-top: auto;
}
.marker {
  width: 9px;
  height: 2px;
  margin: 1px 3px 9px;
  background: #2e9248;
}
.summary {
  flex: 1;
  padding: 2px 0 2px 191px;
}
.summary span {
  display: block;
  width: 193px;
  height: 18px;
  padding-right: 1px;
  background: #efefef;
  line-height: 19px;
  text-align: right;
}
```
